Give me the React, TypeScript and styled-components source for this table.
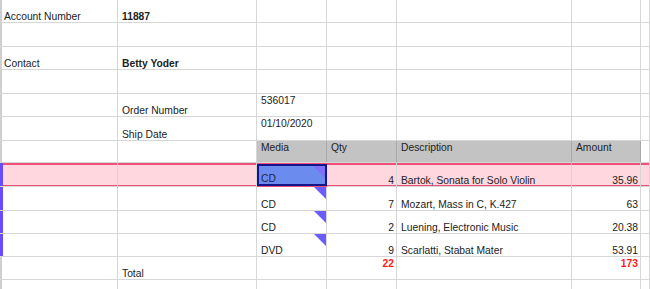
import { styled, createGlobalStyle } from 'styled-components';

const GlobalStyle = createGlobalStyle`
    body {
        margin: 0;
        background: #ffffff;
        overflow: hidden;
        font-family: 'Liberation Sans', Arial, sans-serif;
        font-size: 10.3px;
        color: #222222;
    }
`;

const Sheet = styled.div`
    display: flex;
    flex-direction: column;
    width: 650px;
`;

const Row = styled.div<{ $h: number; $hl?: boolean }>`
    display: grid;
    grid-template-columns: 118px 139px 70px 70px 175px 69px 1fr;
    height: ${(p) => p.$h}px;
    background: ${(p) => (p.$hl ? '#ffd7df' : 'transparent')};
    box-shadow: ${(p) => (p.$hl ? 'inset 0 2px #ee5079, inset 0 -2px #ee5079' : 'none')};
`;

const Cell = styled.div<{
    $top?: boolean;
    $num?: boolean;
    $bold?: boolean;
    $red?: boolean;
    $head?: boolean;
    $mark?: boolean;
    $first?: boolean;
}>`
    position: relative;
    display: flex;
    align-items: ${(p) => (p.$top ? 'flex-start' : 'flex-end')};
    justify-content: ${(p) => (p.$num ? 'flex-end' : 'flex-start')};
    padding: ${(p) => (p.$top ? '1px' : '0')} ${(p) => (p.$num ? '2px' : '3px')} 0 4px;
    box-sizing: border-box;
    border-right: 1px solid ${(p) => (p.$head ? '#a9a9a9' : '#d6d6d6')};
    border-bottom: 1px solid #d6d6d6;
    background: ${(p) => (p.$head ? '#c3c3c3' : 'transparent')};
    font-weight: ${(p) => (p.$bold || p.$red ? 700 : 400)};
    color: ${(p) => (p.$red ? '#ff1a1a' : '#222222')};
    white-space: nowrap;
    line-height: 11px;
    box-shadow: ${(p) =>
        p.$mark ? 'inset 3px 0 #6a4cff' : p.$first ? 'inset 2px 0 #cfcfcf' : 'none'};
`;

const Selected = styled.div`
    position: relative;
    display: flex;
    align-items: flex-end;
    margin: 1px 0;
    padding: 0 3px 0 2px;
    box-sizing: border-box;
    border: 2px solid #15158a;
    background: #6c8bef;
    color: #1c2552;
    line-height: 11px;
`;

const Flag = styled.span<{ $soft?: boolean }>`
    position: absolute;
    top: 0;
    right: 0;
    width: 12px;
    height: 12px;
    background: ${(p) => (p.$soft ? '#7d6ff6' : '#6a5cff')};
    clip-path: polygon(0 0, 100% 0, 100% 100%);
`;

type Line = {
    media: string;
    qty: number;
    desc: string;
    amount: string;
    h: number;
};

const lines: Line[] = [
    { media: 'CD', qty: 7, desc: 'Mozart, Mass in C, K.427', amount: '63', h: 24 },
    { media: 'CD', qty: 2, desc: 'Luening, Electronic Music', amount: '20.38', h: 23 },
    { media: 'DVD', qty: 9, desc: 'Scarlatti, Stabat Mater', amount: '53.91', h: 23 },
];

function Blank({ h }: { h: number }) {
    return (
        <Row $h={h}>
            <Cell $first />
            <Cell />
            <Cell />
            <Cell />
            <Cell />
            <Cell />
            <Cell />
        </Row>
    );
}

export default function App() {
    return (
        <Sheet>
            <GlobalStyle />

            <Row $h={23}>
                <Cell $first>Account Number</Cell>
                <Cell $bold>11887</Cell>
                <Cell />
                <Cell />
                <Cell />
                <Cell />
                <Cell />
            </Row>
            <Blank h={24} />
            <Row $h={23}>
                <Cell $first>Contact</Cell>
                <Cell $bold>Betty Yoder</Cell>
                <Cell />
                <Cell />
                <Cell />
                <Cell />
                <Cell />
            </Row>
            <Blank h={24} />
            <Row $h={23}>
                <Cell $first />
                <Cell>Order Number</Cell>
                <Cell $top>536017</Cell>
                <Cell />
                <Cell />
                <Cell />
                <Cell />
            </Row>
            <Row $h={24}>
                <Cell $first />
                <Cell>Ship Date</Cell>
                <Cell $top>01/10/2020</Cell>
                <Cell />
                <Cell />
                <Cell />
                <Cell />
            </Row>
            <Row $h={22}>
                <Cell $first />
                <Cell />
                <Cell $top $head>Media</Cell>
                <Cell $top $head>Qty</Cell>
                <Cell $top $head>Description</Cell>
                <Cell $top $head>Amount</Cell>
                <Cell />
            </Row>

            <Row $h={24} $hl>
                <Cell $mark />
                <Cell />
                <Selected>
                    CD
                    <Flag $soft />
                </Selected>
                <Cell $num>4</Cell>
                <Cell>Bartok, Sonata for Solo Violin</Cell>
                <Cell $num>35.96</Cell>
                <Cell />
            </Row>

            {lines.map((l, i) => (
                <Row $h={l.h} key={i}>
                    <Cell $mark />
                    <Cell />
                    <Cell>
                        {l.media}
                        <Flag />
                    </Cell>
                    <Cell $num>{l.qty}</Cell>
                    <Cell>{l.desc}</Cell>
                    <Cell $num>{l.amount}</Cell>
                    <Cell />
                </Row>
            ))}

            <Row $h={23}>
                <Cell $first />
                <Cell>Total</Cell>
                <Cell />
                <Cell $num $top $red>22</Cell>
                <Cell />
                <Cell $num $top $red>173</Cell>
                <Cell />
            </Row>
            <Blank h={24} />
        </Sheet>
    );
}
